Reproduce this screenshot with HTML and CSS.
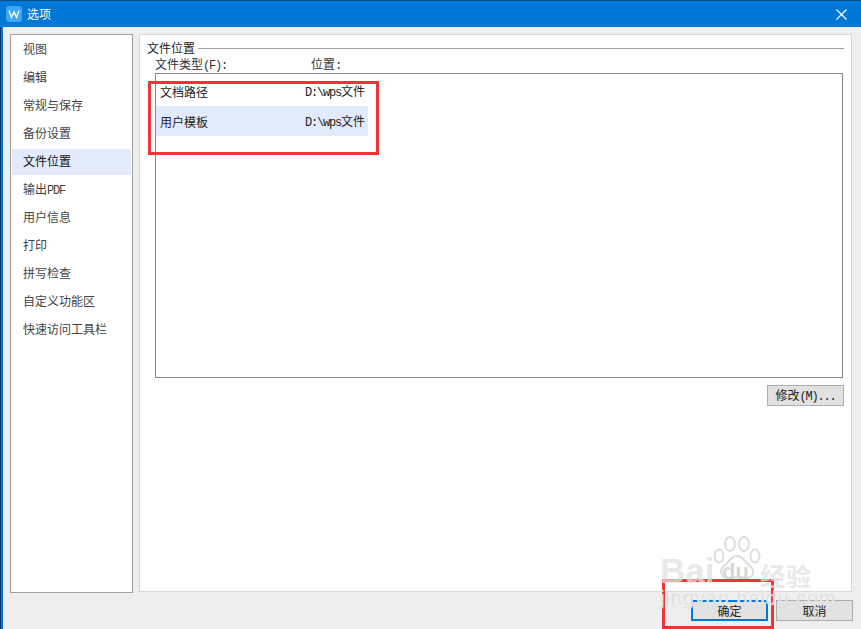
FILE: index.html
```html
<!DOCTYPE html>
<html lang="zh">
<head>
<meta charset="utf-8">
<title>选项</title>
<link rel="stylesheet" href="styles.css">
</head>
<body>
<div class="window">
  <header class="titlebar">
    <svg class="logo" width="16" height="16" viewBox="0 0 16 16"><rect width="16" height="16" rx="3" fill="#3fa5f5"/><path d="M3 4.5 L5.4 11.5 L8 6 L10.6 11.5 L13 4.5" fill="none" stroke="#fff" stroke-width="1.4"/></svg>
    <span class="title">选项</span>
    <svg class="close" width="11" height="11" viewBox="0 0 11 11"><path d="M0.5 0.5 L10.5 10.5 M10.5 0.5 L0.5 10.5" stroke="#fff" stroke-width="1.1" fill="none"/></svg>
  </header>
  <div class="content">
    <div class="columns">
      <nav class="sidebar">
        <div class="nav-item">视图</div>
        <div class="nav-item">编辑</div>
        <div class="nav-item">常规与保存</div>
        <div class="nav-item">备份设置</div>
        <div class="nav-item active">文件位置</div>
        <div class="nav-item">输出<span class="en">PDF</span></div>
        <div class="nav-item">用户信息</div>
        <div class="nav-item">打印</div>
        <div class="nav-item">拼写检查</div>
        <div class="nav-item">自定义功能区</div>
        <div class="nav-item">快速访问工具栏</div>
      </nav>
      <main class="panel">
        <div class="group-head"><span>文件位置</span><i class="rule"></i></div>
        <div class="col-heads"><span class="col-type">文件类型<span class="en">(F):</span></span><span>位置<span class="en">:</span></span></div>
        <div class="list">
          <div class="row"><span class="row-name">文档路径</span><span class="row-path"><span class="en">D:\wps</span>文件</span></div>
          <div class="row selected"><span class="row-name">用户模板</span><span class="row-path"><span class="en">D:\wps</span>文件</span></div>
        </div>
        <div class="modify-row"><button class="btn modify">修改<span class="en">(M)...</span></button></div>
      </main>
    </div>
    <footer class="footer">
      <button class="btn ok">确定</button>
      <button class="btn cancel">取消</button>
    </footer>
  </div>
</div>
<div class="mark mark-list"></div>
<div class="mark mark-ok"></div>
<div class="watermark">
  <svg width="48" height="44" viewBox="0 0 48 44"><g fill="none" stroke="#dedede" stroke-width="2"><ellipse cx="6" cy="20" rx="4.5" ry="6.5"/><ellipse cx="17" cy="8" rx="5" ry="7"/><ellipse cx="31" cy="8" rx="5" ry="7"/><ellipse cx="42" cy="20" rx="4.5" ry="6.5"/><path d="M24 20 C18 20 16 26 11 30 C5 35 9 43 17 42 C22 41 27 41 32 42 C40 43 43 35 37 30 C32 26 30 20 24 20 Z"/></g></svg>
  <span class="wm-bai">Bai</span><span class="wm-du">du</span><span class="wm-jy">经验</span>
  <span class="wm-url">jingyan.baidu.com</span>
</div>
</body>
</html>
```
FILE: styles.css
```css
* { box-sizing: border-box; }
html, body { margin: 0; height: 100%; overflow: hidden; }
body {
  width: 861px;
  height: 629px;
  position: relative;
  font: 12px/14px "Noto Sans CJK SC", "Liberation Sans", sans-serif;
  color: #222;
  background: #eee;
}
.en { font-family: "Liberation Mono", monospace; font-size: 12px; letter-spacing: -1.2px; }
.window {
  height: 629px;
  display: flex;
  flex-direction: column;
  padding-left: 3px;
  background: linear-gradient(to right, #06376a 0, #06376a 1px, #0078d7 1px, #0078d7 3px, #eee 3px);
}
.titlebar {
  height: 27px;
  flex: none;
  margin-left: -3px;
  padding: 0 19px 0 6px;
  display: flex;
  align-items: center;
  background: #0078d7;
  border-top: 1px solid #0a4f86;
  color: #fff;
}
.logo { flex: none; }
.title { margin-left: 5px; font-size: 12px; flex: 1; }
.close { flex: none; margin-right: -5px; }
.content {
  flex: 1;
  display: flex;
  flex-direction: column;
  padding: 7px 8px 7px 7px;
  min-height: 0;
}
.columns { display: flex; gap: 6px; height: 559px; flex: none; padding-right: 1px; }
.sidebar {
  width: 123px;
  flex: none;
  background: #fff;
  border: 1px solid #a0a0a0;
  padding: 1px;
}
.nav-item {
  height: 28px;
  line-height: 25px;
  padding-left: 11px;
  color: #444;
}
.nav-item.active { background: #e1ebfb; color: #111; height: 26px; margin: 1px 0; line-height: 24px; }
.panel {
  flex: 1;
  background: #fff;
  border: 1px solid #d8d8d8;
  padding: 6px 7px 0 7px;
  min-width: 0;
  height: 558px;
}
.group-head { display: flex; align-items: center; gap: 3px; height: 14px; color: #222; }
.rule { flex: 1; height: 1px; background: #a0a0a0; }
.col-heads { display: flex; padding-left: 8px; height: 14px; margin-top: 2px; color: #333; }
.col-type { width: 156px; }
.list {
  margin: 2px 1px 0 8px;
  height: 305px;
  border: 1px solid #828790;
  padding-top: 2px;
}
.row {
  height: 30px;
  width: 212px;
  display: flex;
  align-items: center;
  padding: 1px 3px 0 4px;
  color: #222;
}
.row.selected { background: #e1ebfb; }
.row-name { width: 145px; }
.row-path { flex: none; }
.modify-row { display: flex; justify-content: flex-end; margin-top: 7px; }
.btn {
  font: inherit;
  color: #222;
  background: #e1e1e1;
  border: 1px solid #adadad;
  padding: 0;
}
.modify { width: 77px; height: 21px; }
.footer { display: flex; justify-content: flex-end; gap: 8px; margin-top: 7px; }
.ok { width: 77px; height: 21px; border: 2px solid #0078d7; }
.cancel { width: 77px; height: 21px; }
.mark { position: absolute; border: 3px solid #f33338; }
.mark-list { left: 148px; top: 81px; width: 231px; height: 74px; }
.mark-ok { left: 662px; top: 579px; width: 112px; height: 50px; }
.watermark {
  position: absolute;
  left: 660px;
  top: 534px;
  width: 170px;
  height: 92px;
  color: rgba(225,225,225,.75);
  pointer-events: none;
}
.watermark svg { position: absolute; left: 53px; top: 2px; }
.wm-bai { position: absolute; left: 0; top: 21px; font: bold 35px/32px "Liberation Sans", sans-serif; }
.wm-du { position: absolute; left: 62px; top: 28px; font: bold 22px/20px "Liberation Sans", sans-serif; color: #d8d8d8; }
.wm-jy { position: absolute; left: 100px; top: 27px; font: bold 25px/28px "Noto Sans CJK SC", sans-serif; letter-spacing: 1px; }
.wm-url { position: absolute; left: 0; top: 57px; font: 20px/14px "Liberation Sans", sans-serif; letter-spacing: .9px; color: #dedede; text-shadow: 0 0 1px #fff; }
```
